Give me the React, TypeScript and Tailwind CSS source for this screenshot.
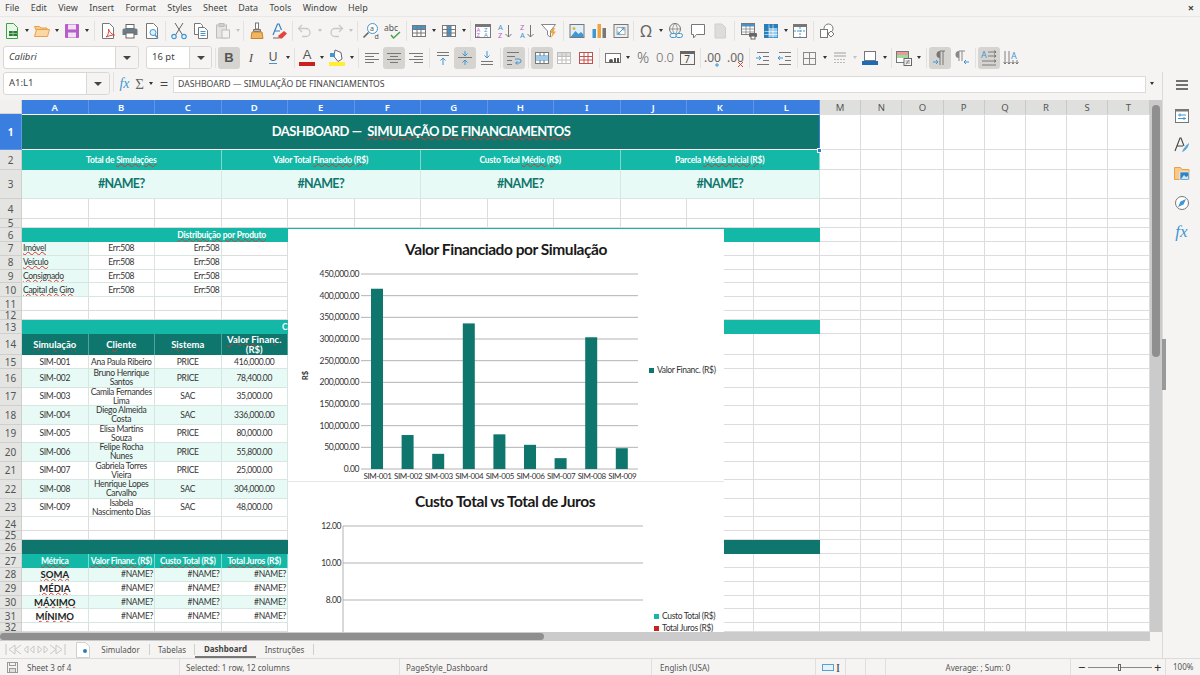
import React from "react";

const DARK = "bg-[#0f766e]";
const TEAL = "bg-[#14b8a6]";
const PALE = "bg-[#e8faf5]";
const SQ = "underline decoration-wavy decoration-[#e0322c] decoration-1 underline-offset-0";

function Ico({ children }: { children: React.ReactNode }) {
  return (
    <svg width="18" height="18" viewBox="0 0 18 18" fill="none" strokeWidth="1">
      {children}
    </svg>
  );
}

function Btn({ children, active, w = "w-[22px]" }: { children: React.ReactNode; active?: boolean; w?: string }) {
  return (
    <div className={`${w} h-[22px] shrink-0 flex items-center justify-center rounded-[3px] ${active ? "bg-[#d6d4d1]" : ""}`}>
      {children}
    </div>
  );
}

function Drop({ pale, w = "w-[8px]" }: { pale?: boolean; w?: string }) {
  return (
    <div className={`${w} shrink-0 flex justify-center`}>
      <div className={`w-0 h-0 border-x-[2.5px] border-x-transparent border-t-[3px] ${pale ? "border-t-[#c4c4c4]" : "border-t-[#333]"}`} />
    </div>
  );
}

function Sep({ w = "w-[5px]" }: { w?: string }) {
  return (
    <div className={`${w} shrink-0 flex justify-center`}>
      <div className="w-px h-[20px] bg-[#e3e2e0]" />
    </div>
  );
}

function Lines({ ys, x1 = 3, x2 = 15, color = "#777" }: { ys: [number, number?, number?][]; x1?: number; x2?: number; color?: string }) {
  return (
    <>
      {ys.map(([y, a, b], i) => (
        <line key={i} x1={a ?? x1} x2={b ?? x2} y1={y + 0.5} y2={y + 0.5} stroke={color} />
      ))}
    </>
  );
}

function TableIco({ fill, rows = false, color = "#777" }: { fill?: string; rows?: boolean; color?: string }) {
  return (
    <Ico>
      <rect x="2.5" y="3.5" width="13" height="11" fill="#fff" stroke={color} />
      {fill && (rows ? <rect x="3" y="4" width="12" height="3" fill={fill} /> : <rect x="7" y="4" width="4" height="10" fill={fill} />)}
      <path d="M2.5 7.5h13M2.5 11h13M7 3.5v11M11 3.5v11" stroke={color} />
    </Ico>
  );
}

function Row1() {
  return (
    <div className="h-[27px] flex items-center pl-px">
      <Btn>
        <Ico>
          <path d="M3.5 1.5h7l4 4v11h-11z" fill="#e9f6ea" stroke="#43a047" />
          <rect x="6" y="9" width="8" height="5" fill="#2e7d32" />
          <path d="M6 11.5h8M10 9v5" stroke="#cde8ce" strokeWidth="0.6" />
        </Ico>
      </Btn>
      <Drop />
      <Btn>
        <Ico>
          <path d="M1.5 4.5h5l1.5 1.5h6v2h-11z" fill="#f7c98a" stroke="#e6a24e" />
          <path d="M1.5 14.5l2-7h13l-2 7z" fill="#fbd7a3" stroke="#e6a24e" />
        </Ico>
      </Btn>
      <Drop />
      <Btn>
        <Ico>
          <rect x="2" y="2" width="14" height="14" rx="1" fill="#b65fc6" />
          <rect x="5" y="2.5" width="8" height="5" fill="#f2e0f5" />
          <rect x="5" y="10.5" width="8" height="5" fill="#f2e0f5" />
        </Ico>
      </Btn>
      <Drop />
      <Sep w="w-[6px]" />
      <Btn>
        <Ico>
          <path d="M3.5 1.5h7l4 4v11h-11z" fill="#fff" stroke="#777" />
          <path d="M7 15c2-1 3-5 2.5-8 1 3 2.5 5 6 6-3 0-6 1-8.5 2z" stroke="#d9453c" />
        </Ico>
      </Btn>
      <Btn>
        <Ico>
          <rect x="5" y="2.5" width="8" height="4" fill="#fff" stroke="#666" />
          <path d="M3 6.5h12a1.5 1.5 0 0 1 1.5 1.5v5h-15v-5a1.5 1.5 0 0 1 1.5-1.5z" fill="#6b7a84" />
          <rect x="5" y="11" width="8" height="5" fill="#fff" stroke="#666" />
        </Ico>
      </Btn>
      <Btn>
        <Ico>
          <path d="M3.5 1.5h7l4 4v11h-11z" fill="#fff" stroke="#777" />
          <circle cx="10" cy="10.5" r="3" fill="#e3f1fb" stroke="#3f97d3" />
          <path d="M12 13l3 3" stroke="#3f97d3" strokeWidth="1.5" />
        </Ico>
      </Btn>
      <Sep />
      <Btn>
        <Ico>
          <path d="M5 1l7.5 12M13 1L5.5 13" stroke="#666" />
          <circle cx="4" cy="14.5" r="2.2" stroke="#3f97d3" strokeWidth="1.2" />
          <circle cx="14" cy="14.5" r="2.2" stroke="#3f97d3" strokeWidth="1.2" />
        </Ico>
      </Btn>
      <Btn>
        <Ico>
          <path d="M2.5 1.5h6l2 2v9h-8z" fill="#fff" stroke="#777" />
          <path d="M6.5 5.5h6l3 3v8h-9z" fill="#fff" stroke="#777" />
          <path d="M8.5 9.5h5M8.5 11.5h5M8.5 13.5h5" stroke="#3f97d3" />
        </Ico>
      </Btn>
      <Btn>
        <Ico>
          <rect x="2.5" y="3" width="10" height="13" fill="#e3e3e1" stroke="#bdbdbb" />
          <rect x="5" y="1.5" width="5" height="3" fill="#cfcfcd" stroke="#bdbdbb" />
          <rect x="8" y="8" width="7.5" height="8" fill="#f2f2f0" stroke="#bdbdbb" />
        </Ico>
      </Btn>
      <Drop pale w="w-[7px]" />
      <Sep />
      <Btn>
        <Ico>
          <rect x="7.5" y="1" width="3" height="6" fill="#fff" stroke="#777" />
          <path d="M5.5 7.5h7v2h-7z" fill="#bbb" stroke="#777" />
          <path d="M4 10h10l1 6.5H3z" fill="#f3b45e" stroke="#c78430" />
        </Ico>
      </Btn>
      <Btn>
        <Ico>
          <path d="M3 13L7.5 2h1.5l2.5 6M5 9h5" stroke="#3a7fc1" strokeWidth="1.2" />
          <path d="M8 14l6-5 3 2.5-5 5H9.5z" fill="#e2453c" />
          <path d="M3 16h6" stroke="#666" />
        </Ico>
      </Btn>
      <Sep w="w-[4px]" />
      <Btn>
        <Ico>
          <path d="M6 3L2.5 6.5 6 10" stroke="#c8c8c6" strokeWidth="1.3" />
          <path d="M3 6.5h7a4 4 0 0 1 0 8H6" stroke="#c8c8c6" strokeWidth="1.3" />
        </Ico>
      </Btn>
      <Drop pale />
      <div className="w-px shrink-0" />
      <Btn>
        <Ico>
          <path d="M12 3l3.5 3.5L12 10" stroke="#c8c8c6" strokeWidth="1.3" />
          <path d="M15 6.5H8a4 4 0 0 0 0 8h4" stroke="#c8c8c6" strokeWidth="1.3" />
        </Ico>
      </Btn>
      <Drop pale />
      <Sep />
      <Btn>
        <Ico>
          <circle cx="10.5" cy="6.5" r="5" fill="#fff" stroke="#3f97d3" />
          <path d="M6.5 10.5l-5 5" stroke="#666" strokeWidth="1.6" />
          <text x="8" y="9" fontSize="7" fill="#555" fontFamily="Noto Sans">a</text>
          <text x="12.5" y="17" fontSize="7" fill="#555" fontFamily="Noto Sans">d</text>
        </Ico>
      </Btn>
      <Btn>
        <Ico>
          <text x="0" y="9" fontSize="8.5" fill="#555" fontFamily="Noto Sans">abc</text>
          <path d="M7 13l2.5 3L16 10" stroke="#43a047" strokeWidth="1.4" />
        </Ico>
      </Btn>
      <Sep w="w-[4px]" />
      <Btn><TableIco fill="#3f97d3" rows /></Btn>
      <Drop />
      <Btn><TableIco fill="#3f97d3" /></Btn>
      <Drop />
      <Sep w="w-[4px]" />
      <Btn>
        <Ico>
          <rect x="1.5" y="2.5" width="15" height="13" fill="#fff" stroke="#777" />
          <rect x="2" y="3" width="14" height="2" fill="#777" />
          <text x="2.5" y="10" fontSize="6" fill="#c061cb" fontFamily="Noto Sans">A</text>
          <text x="2.5" y="15" fontSize="6" fill="#c061cb" fontFamily="Noto Sans">Z</text>
          <text x="10" y="10" fontSize="6" fill="#3f97d3" fontFamily="Noto Sans">Z</text>
          <text x="10" y="15" fontSize="6" fill="#3f97d3" fontFamily="Noto Sans">A</text>
        </Ico>
      </Btn>
      <Btn>
        <Ico>
          <text x="2" y="8" fontSize="7.5" fill="#3f97d3" fontFamily="Noto Sans">A</text>
          <text x="2" y="16" fontSize="7.5" fill="#c061cb" fontFamily="Noto Sans">Z</text>
          <path d="M12.5 3v12M9.5 12l3 3 3-3" stroke="#777" />
        </Ico>
      </Btn>
      <Btn>
        <Ico>
          <text x="2" y="8" fontSize="7.5" fill="#c061cb" fontFamily="Noto Sans">Z</text>
          <text x="2" y="16" fontSize="7.5" fill="#3f97d3" fontFamily="Noto Sans">A</text>
          <path d="M12.5 3v12M9.5 12l3 3 3-3" stroke="#777" />
        </Ico>
      </Btn>
      <Btn>
        <Ico>
          <path d="M1.5 2.5h14l-5 6.5v6l-3-2V9z" fill="#fff" stroke="#888" />
          <path d="M13 6l-3 5h2.5L11 16l5-6.5h-2.5L15 6z" fill="#f0a53c" />
        </Ico>
      </Btn>
      <Sep w="w-[6px]" />
      <Btn>
        <Ico>
          <rect x="2" y="2.5" width="14" height="13" fill="#dff0fb" stroke="#777" />
          <circle cx="6" cy="6.5" r="1.5" fill="#f0b13c" />
          <path d="M2.5 15l5-6 3 3 2.5-2 2.5 2.5V15z" fill="#3f97d3" />
        </Ico>
      </Btn>
      <Btn>
        <Ico>
          <rect x="2.5" y="7" width="3.5" height="9" fill="#3f97d3" />
          <rect x="7.5" y="2" width="3.5" height="14" fill="#f0a53c" />
          <rect x="12.5" y="6" width="3.5" height="10" fill="#777" />
        </Ico>
      </Btn>
      <Btn>
        <Ico>
          <rect x="2" y="2.5" width="14" height="13" fill="#eee" stroke="#777" />
          <rect x="5" y="5.5" width="8" height="7" fill="#fff" stroke="#aaa" />
          <path d="M6 12l6-6M12 8.5V6H9.5M6 9.5V12h2.5" stroke="#3f97d3" />
        </Ico>
      </Btn>
      <Sep w="w-[3px]" />
      <Btn><span className="text-[16px] leading-none text-[#666] font-['Noto_Sans',sans-serif]">Ω</span></Btn>
      <Drop />
      <Btn>
        <Ico>
          <circle cx="8" cy="7" r="5.5" stroke="#777" />
          <path d="M2.5 7h11M8 1.5c-3 3-3 8 0 11M8 1.5c3 3 3 8 0 11" stroke="#777" strokeWidth="0.7" />
          <rect x="3" y="11.5" width="6.5" height="4" rx="2" fill="#f5f4f2" stroke="#3f97d3" />
          <rect x="9" y="11.5" width="6.5" height="4" rx="2" fill="#f5f4f2" stroke="#3f97d3" />
        </Ico>
      </Btn>
      <Btn>
        <Ico>
          <path d="M2.5 2.5h13v10H7.5L4.5 16v-3.5h-2z" fill="#fff" stroke="#777" />
        </Ico>
      </Btn>
      <Btn>
        <Ico>
          <path d="M4 2h7l3.5 3.5V16H4z" fill="#dcdcda" stroke="#cfcfcd" />
        </Ico>
      </Btn>
      <Sep w="w-[7px]" />
      <Btn>
        <Ico>
          <rect x="1.5" y="1.5" width="13" height="11" fill="#fff" stroke="#777" />
          <rect x="2" y="2" width="12" height="2.5" fill="#3f97d3" />
          <path d="M1.5 7h13M1.5 10h13M6 1.5v11M10 1.5v11" stroke="#777" strokeWidth="0.7" />
          <rect x="9" y="11" width="8" height="4" rx="1" fill="#666" />
          <rect x="11" y="14" width="4" height="3" fill="#fff" stroke="#666" />
        </Ico>
      </Btn>
      <Btn>
        <Ico>
          <rect x="2.5" y="2.5" width="13" height="13" fill="#9ccbe9" stroke="#3f97d3" />
          <rect x="2" y="2" width="5" height="14" fill="#2b7fb8" />
          <rect x="2" y="2" width="14" height="4" fill="#2b7fb8" />
          <path d="M2.5 9.5h13M2.5 12.5h13M7 2.5v13M11 2.5v13" stroke="#fff" strokeWidth="0.6" />
        </Ico>
      </Btn>
      <Drop w="w-[7px]" />
      <Btn>
        <Ico>
          <rect x="2.5" y="2.5" width="13" height="13" fill="#fff" stroke="#777" />
          <rect x="3" y="3" width="12" height="2" fill="#777" />
          <path d="M3 9h12M9 5v10" stroke="#3f97d3" strokeDasharray="2 1" />
        </Ico>
      </Btn>
      <Sep />
      <Btn>
        <Ico>
          <circle cx="10.5" cy="6.5" r="4.5" fill="#fff" stroke="#777" />
          <rect x="2.5" y="7.5" width="7" height="8" fill="#fff" stroke="#777" />
          <path d="M13 9l3 3-3 3-3-3z" fill="#fff" stroke="#777" />
        </Ico>
      </Btn>
    </div>
  );
}

function SelectBox({ label, w, divider, italic }: { label: string; w: string; divider: string; italic?: boolean }) {
  return (
    <div className={`${w} h-[23px] shrink-0 flex rounded-[3px] border border-[#d9d8d6] bg-white`}>
      <div className={`flex-1 flex items-center pl-[5px] text-[9.5px] text-[#444] ${italic ? "italic" : ""}`}>{label}</div>
      <div className={`${divider} flex items-center justify-center bg-[#f5f4f2] border-l border-[#d9d8d6] rounded-r-[3px]`}>
        <div className="w-0 h-0 border-x-[4px] border-x-transparent border-t-[4px] border-t-[#444]" />
      </div>
    </div>
  );
}

function Row2() {
  return (
    <div className="h-[28px] flex items-center pl-[3px] pb-px">
      <SelectBox label="Calibri" w="w-[136px]" divider="w-[23px]" italic />
      <div className="w-[7px] shrink-0" />
      <SelectBox label="16 pt" w="w-[66px]" divider="w-[22px]" />
      <Sep w="w-[6px]" />
      <Btn active><span className="text-[13px] font-bold text-[#555] font-['Liberation_Sans',sans-serif]">B</span></Btn>
      <Btn><span className="text-[13px] italic text-[#555] font-['Liberation_Serif',serif]">I</span></Btn>
      <Btn>
        <div className="flex flex-col items-center">
          <span className="text-[12px] leading-[12px] text-[#555] font-['Liberation_Sans',sans-serif]">U</span>
          <div className="w-[8px] h-px bg-[#3f97d3]" />
        </div>
      </Btn>
      <Drop />
      <Sep w="w-[4px]" />
      <Btn>
        <div className="flex flex-col items-center">
          <span className="text-[13px] leading-[12px] text-[#555] font-['Liberation_Sans',sans-serif]">A</span>
          <div className="w-[16px] h-[4px] mt-px bg-[#c9211e]" />
        </div>
      </Btn>
      <Drop />
      <Btn>
        <Ico>
          <path d="M7 1l6 2.5 1 6.5-4 2.5-4-5z" fill="#fff" stroke="#666" />
          <rect x="2" y="4" width="5" height="4" fill="#3f97d3" />
          <rect x="1" y="13" width="16" height="4" fill="#ffee33" />
        </Ico>
      </Btn>
      <Drop />
      <Sep />
      <Btn><Ico><Lines ys={[[4, 2, 16], [7, 2, 11], [10, 2, 16], [13, 2, 11]]} /></Ico></Btn>
      <Btn active><Ico><Lines ys={[[4, 2, 16], [7, 5, 13], [10, 2, 16], [13, 5, 13]]} /></Ico></Btn>
      <Btn><Ico><Lines ys={[[4, 2, 16], [7, 7, 16], [10, 2, 16], [13, 7, 16]]} /></Ico></Btn>
      <Sep />
      <Btn>
        <Ico>
          <Lines ys={[[3], [6]]} />
          <path d="M9 16V9M6.5 11.5L9 9l2.5 2.5" stroke="#3f97d3" />
        </Ico>
      </Btn>
      <Btn active>
        <Ico>
          <Lines ys={[[8, 2, 16]]} />
          <path d="M9 2v5M6.5 4.5L9 7l2.5-2.5M9 16v-5M6.5 13.5L9 11l2.5 2.5" stroke="#3f97d3" />
        </Ico>
      </Btn>
      <Btn>
        <Ico>
          <Lines ys={[[12], [15]]} />
          <path d="M9 2v7M6.5 6.5L9 9l2.5-2.5" stroke="#3f97d3" />
        </Ico>
      </Btn>
      <Sep />
      <Btn active>
        <Ico>
          <Lines ys={[[3, 2, 14], [7, 2, 10], [11, 2, 7], [15, 2, 7]]} />
          <path d="M10 10h4a2 2 0 0 1 0 4h-3M12.5 12.5L10.5 14l2 1.5" stroke="#3f97d3" />
        </Ico>
      </Btn>
      <Sep w="w-[6px]" />
      <Btn active>
        <Ico>
          <rect x="2.5" y="3.5" width="13" height="11" fill="#fff" stroke="#777" />
          <path d="M2.5 7h13M2.5 11h13" stroke="#3f97d3" />
          <path d="M3 9h12" stroke="#3f97d3" />
          <path d="M7 3.5V7M11 3.5V7M7 11v3.5M11 11v3.5" stroke="#777" />
        </Ico>
      </Btn>
      <Btn><TableIco color="#bdbdbb" fill="#dcdcda" rows /></Btn>
      <Btn><TableIco color="#c0504d" /></Btn>
      <Sep />
      <Btn>
        <Ico>
          <rect x="1.5" y="4.5" width="15" height="9" fill="#fff" stroke="#777" />
          <circle cx="7" cy="12" r="2" fill="#555" />
          <rect x="10" y="9" width="2" height="5" fill="#555" />
          <rect x="13" y="9" width="2" height="5" fill="#555" />
        </Ico>
      </Btn>
      <Drop />
      <Btn><span className="text-[15px] font-light text-[#666] font-['Noto_Sans',sans-serif]">%</span></Btn>
      <Btn><span className="text-[13px] font-light text-[#666] font-['Noto_Sans',sans-serif]">0.0</span></Btn>
      <Btn>
        <div className="w-[15px] h-[14px] border border-[#666] border-t-[3px] flex items-center justify-center text-[10px] leading-none text-[#444]">7</div>
      </Btn>
      <Sep w="w-[4px]" />
      <Btn>
        <Ico>
          <text x="0" y="13" fontSize="12" fill="#666" fontFamily="Noto Sans">.00</text>
          <path d="M13 14v4M11 16h4" stroke="#3f97d3" />
        </Ico>
      </Btn>
      <div className="w-px shrink-0" />
      <Btn>
        <Ico>
          <text x="0" y="13" fontSize="12" fill="#666" fontFamily="Noto Sans">.00</text>
          <path d="M11 13l5 5M16 13l-5 5" stroke="#d9453c" />
        </Ico>
      </Btn>
      <Sep />
      <Btn>
        <Ico>
          <Lines ys={[[3], [15]]} />
          <Lines ys={[[7, 9, 15], [11, 9, 15]]} />
          <path d="M2 9h5M5 7l2 2-2 2" stroke="#3f97d3" />
        </Ico>
      </Btn>
      <Btn>
        <Ico>
          <Lines ys={[[3], [15]]} />
          <Lines ys={[[7, 9, 15], [11, 9, 15]]} />
          <path d="M7 9H2M4 7L2 9l2 2" stroke="#3f97d3" />
        </Ico>
      </Btn>
      <Sep w="w-[3px]" />
      <Btn>
        <Ico>
          <rect x="2.5" y="3.5" width="12" height="12" stroke="#888" />
          <path d="M8.5 3.5v12M2.5 9.5h12" stroke="#888" />
        </Ico>
      </Btn>
      <Drop />
      <Btn>
        <Ico>
          <path d="M3 4h12M3 7h12" stroke="#bbb" strokeWidth="1.3" />
          <path d="M3 10.5h12M3 13.5h12" stroke="#bbb" strokeDasharray="2 1" />
        </Ico>
      </Btn>
      <Drop pale />
      <Btn>
        <Ico>
          <rect x="3.5" y="2.5" width="11" height="9" fill="#fff" stroke="#777" />
          <rect x="1" y="12" width="16" height="4" fill="#1f6ab5" />
        </Ico>
      </Btn>
      <Drop />
      <Sep w="w-[4px]" />
      <Btn>
        <Ico>
          <rect x="1.5" y="2.5" width="12" height="11" fill="#fff" stroke="#777" />
          <rect x="2" y="3" width="11" height="3" fill="#e99" />
          <rect x="2" y="6" width="11" height="3" fill="#9d9" />
          <rect x="9" y="9.5" width="7.5" height="7" fill="#fff" stroke="#666" />
          <path d="M10.5 12h4.5M10.5 14h4.5M14 11l-3 4.5" stroke="#666" strokeWidth="0.7" />
        </Ico>
      </Btn>
      <Drop />
      <Sep w="w-[6px]" />
      <Btn active>
        <Ico>
          <path d="M9 16V2h5M12 2v14" stroke="#777" />
          <path d="M9 2a3.5 3.5 0 0 0 0 7" fill="#777" />
          <path d="M2 13h5M5 11l2 2-2 2" stroke="#3f97d3" />
        </Ico>
      </Btn>
      <Btn>
        <Ico>
          <path d="M6 12V2h6M9 2v10" stroke="#888" />
          <path d="M6 2a3.5 3.5 0 0 0 0 7" fill="#888" />
          <path d="M16 13h-5M13 11l-2 2 2 2" stroke="#3f97d3" />
        </Ico>
      </Btn>
      <Sep w="w-[5px]" />
      <Btn active>
        <Ico>
          <text x="1" y="9" fontSize="9" fill="#3f97d3" fontFamily="Noto Sans">A</text>
          <path d="M8 3h8M8 7h8M2 12h14M2 16h14M14 1.5L16 3l-2 1.5M14 5.5L16 7l-2 1.5M14 10.5L16 12l-2 1.5" stroke="#666" strokeWidth="0.8" />
        </Ico>
      </Btn>
      <Btn>
        <Ico>
          <text x="9" y="10" fontSize="9" fill="#3f97d3" fontFamily="Noto Sans">A</text>
          <path d="M3 2v13M7 2v13M11 11v4M15 11v4M1.5 13L3 15l1.5-2M5.5 13L7 15l1.5-2M9.5 13l1.5 2 1.5-2M13.5 13l1.5 2 1.5-2" stroke="#666" strokeWidth="0.8" />
        </Ico>
      </Btn>
    </div>
  );
}

function FormulaBar() {
  return (
    <div className="h-[28px] flex items-start pl-[3px] text-[#333]">
      <SelectBox label="A1:L1" w="w-[107px]" divider="w-[23px]" />
      <Sep w="w-[7px]" />
      <span className="w-[15px] text-center text-[14px] italic leading-[24px] text-[#3f97d3] font-['Liberation_Serif',serif]">fx</span>
      <span className="w-[15px] text-center text-[15px] leading-[24px] text-[#666] font-['Liberation_Serif',serif]">Σ</span>
      <div className="pt-[10px]"><Drop /></div>
      <span className="w-[18px] text-center text-[15px] leading-[23px] text-[#444] font-['Noto_Sans',sans-serif]">=</span>
      <div className="mt-[4px] w-[973px] h-[17px] flex items-center pl-[4px] bg-white border border-[#dcdbd9] text-[8.7px] text-[#444] font-['Noto_Sans',sans-serif]">
        DASHBOARD — SIMULAÇÃO DE FINANCIAMENTOS
      </div>
      <div className="w-[12px] pt-[10px] pl-[2px]"><Drop /></div>
    </div>
  );
}

const LETTERS = "ABCDEFGHIJKLMNOPQRST".split("");
const GRID = "grid grid-cols-[repeat(12,66.5px)_repeat(8,41.2px)]";

function ColHead() {
  return (
    <div className="flex h-[14px] shrink-0">
      <div className="w-[22px] shrink-0 bg-[#f1f0ee] border-r border-b border-[#d4d3d1]" />
      <div className={GRID}>
        {LETTERS.map((l, i) => (
          <div
            key={l}
            className={`flex items-center justify-center pt-px text-[9.5px] border-r ${
              i < 12 ? "bg-[#3a7fdf] text-white font-semibold border-[#5f97e6]" : "bg-[#dfdfdd] text-[#555] border-[#c9c9c7]"
            }`}
          >
            {l}
          </div>
        ))}
      </div>
    </div>
  );
}

function Sheet({
  n,
  h,
  from = 0,
  blue,
  children,
}: {
  n: number;
  h: string;
  from?: number;
  blue?: boolean;
  children?: React.ReactNode;
}) {
  const empties = [];
  for (let i = from; i < 20; i++) empties.push(i);
  return (
    <div className={`flex ${h} shrink-0`}>
      <div
        className={`w-[22px] shrink-0 flex items-center justify-center overflow-hidden text-[10px] leading-none border-r border-b ${
          blue ? "bg-[#3a7fdf] text-white font-bold border-[#5f97e6]" : "bg-[#e4e4e2] text-[#555] border-[#cfcfcd]"
        }`}
      >
        {n}
      </div>
      <div className={`${GRID} font-['Lato',sans-serif]`}>
        {children}
        {empties.map((i) => (
          <div key={i} className="border-r border-b border-[#dcdcdc]" />
        ))}
      </div>
    </div>
  );
}

function Cell({ className = "", children }: { className?: string; children?: React.ReactNode }) {
  return <div className={`flex items-center overflow-hidden whitespace-pre ${className}`}>{children}</div>;
}

const C = "justify-center text-center";
const R = "justify-end pr-px";
const LINE = "border-r border-b border-[#d8e6e2]";
const BODY = `pt-px text-[8.5px] leading-[9px] tracking-[-0.3px] text-[#333] ${LINE}`;

const SIMS = [
  ["SIM-001", "Ana Paula Ribeiro", "PRICE", "416,000.00"],
  ["SIM-002", "Bruno Henrique\nSantos", "PRICE", "78,400.00"],
  ["SIM-003", "Camila Fernandes\nLima", "SAC", "35,000.00"],
  ["SIM-004", "Diego Almeida\nCosta", "SAC", "336,000.00"],
  ["SIM-005", "Elisa Martins\nSouza", "PRICE", "80,000.00"],
  ["SIM-006", "Felipe Rocha\nNunes", "PRICE", "55,800.00"],
  ["SIM-007", "Gabriela Torres\nVieira", "PRICE", "25,000.00"],
  ["SIM-008", "Henrique Lopes\nCarvalho", "SAC", "304,000.00"],
  ["SIM-009", "Isabela\nNascimento Dias", "SAC", "48,000.00"],
];
const PRODUCTS = ["Imóvel", "Veículo", "Consignado", "Capital de Giro"];
const METRICS = ["SOMA", "MÉDIA", "MÁXIMO", "MÍNIMO"];
const KPIS = [
  ["Total de ", "Simulações"],
  ["Valor Total ", "Financiado (R$)"],
  ["Custo Total ", "Médio (R$)"],
  ["Parcela ", "Média Inicial (R$)"],
];

function Spreadsheet() {
  return (
    <div className="relative w-[1150px] h-[532px] overflow-hidden bg-white">
      <ColHead />
      <Sheet n={1} h="h-[36px]" from={12} blue>
        <Cell className={`col-span-12 ${DARK} ${C} pb-px text-[13px] tracking-[-0.5px] font-bold text-white`}>
          DASHBOARD — <span className={`ml-[3px] ${SQ}`}>SIMULAÇÃO DE FINANCIAMENTOS</span>
        </Cell>
      </Sheet>
      <Sheet n={2} h="h-[20px]" from={12}>
        {KPIS.map(([a, b]) => (
          <Cell key={a} className={`col-span-3 ${TEAL} ${C} text-[8.5px] tracking-[-0.2px] font-bold text-white border-r border-[#7fd9ca]`}>
            {a}<span className={SQ}>{b}</span>
          </Cell>
        ))}
      </Sheet>
      <Sheet n={3} h="h-[29px]" from={12}>
        {KPIS.map(([a]) => (
          <Cell key={a} className={`col-span-3 ${PALE} ${C} pt-px text-[12.5px] tracking-[-0.6px] font-bold text-[#0f766e] border-r border-b border-[#d5e8e3]`}>
            #NAME?
          </Cell>
        ))}
      </Sheet>
      <Sheet n={4} h="h-[20px]" />
      <Sheet n={5} h="h-[9px]" />
      <Sheet n={6} h="h-[14px]" from={12}>
        <Cell className={`col-span-6 ${TEAL} justify-end pr-[155px] text-[8.5px] tracking-[-0.2px] font-bold text-white`}>
          <span className={SQ}>Distribuição por Produto</span>
        </Cell>
        <Cell className={`col-span-6 ${TEAL}`} />
      </Sheet>
      {PRODUCTS.map((p, i) => (
        <Sheet key={p} n={7 + i} h="h-[13.75px]" from={3}>
          <Cell className={`${BODY} ${PALE} pl-px`}><span className={SQ}>{p}</span></Cell>
          <Cell className={`${BODY} ${C}`}>Err:508</Cell>
          <Cell className={`${BODY} ${R}`}>Err:508</Cell>
        </Sheet>
      ))}
      <Sheet n={11} h="h-[14px]" />
      <Sheet n={12} h="h-[9px]" />
      <Sheet n={13} h="h-[14px]" from={12}>
        <Cell className={`col-span-12 ${TEAL} pl-[260px] text-[8.5px] font-bold text-white`}>Comparativo de Simulações</Cell>
      </Sheet>
      <Sheet n={14} h="h-[21px]" from={4}>
        {["Simulação", "Cliente", "Sistema", "Valor Financ.\n(R$)"].map((t) => (
          <Cell key={t} className={`${DARK} ${C} text-[9.5px] leading-[10px] font-bold text-white border-r border-[#4ea59c]`}>
            <span className={SQ}>{t}</span>
          </Cell>
        ))}
      </Sheet>
      {SIMS.map((s, i) => {
        const bg = i % 2 === 1 ? PALE : "bg-white";
        return (
          <Sheet key={s[0]} n={15 + i} h={i === 0 ? "h-[14px]" : "h-[18.5px]"} from={4}>
            {s.map((t, j) => (
              <Cell key={j} className={`${BODY} ${bg} ${C}`}>{t}</Cell>
            ))}
          </Sheet>
        );
      })}
      <Sheet n={24} h="h-[14px]" />
      <Sheet n={25} h="h-[9px]" />
      <Sheet n={26} h="h-[14px]" from={12}>
        <Cell className={`col-span-12 ${DARK}`} />
      </Sheet>
      <Sheet n={27} h="h-[14px]" from={4}>
        {["Métrica", "Valor Financ. (R$)", "Custo Total (R$)", "Total Juros (R$)"].map((t) => (
          <Cell key={t} className={`${TEAL} ${C} text-[8.5px] tracking-[-0.25px] font-bold text-white border-r border-[#7fd9ca]`}>
            <span className={SQ}>{t}</span>
          </Cell>
        ))}
      </Sheet>
      {METRICS.map((m, i) => {
        const bg = i % 2 === 0 ? PALE : "bg-white";
        return (
          <Sheet key={m} n={28 + i} h="h-[13.75px]" from={4}>
            <Cell className={`pt-px text-[9.5px] leading-[9px] ${LINE} ${bg} ${C} font-bold text-[#222]`}><span className={SQ}>{m}</span></Cell>
            {[0, 1, 2].map((j) => (
              <Cell key={j} className={`${BODY} ${bg} ${R}`}>#NAME?</Cell>
            ))}
          </Sheet>
        );
      })}
      <Sheet n={32} h="h-[9px]" />

      {/* selection A1:L1 */}
      <div className="absolute left-[22px] top-[14px] w-[798px] h-[36px] border-y-[1.5px] border-white border-r border-r-[#3a7fdf]" />
      <div className="absolute left-[817px] top-[48px] w-[5px] h-[5px] bg-[#2f7ad6] border border-white" />

      {/* charts floating over the cells */}
      <div className="absolute left-[288px] top-[129px] w-[436px] h-[403px] bg-white overflow-hidden">
        <ValorChart />
        <div className="h-px bg-[#e6e6e6]" />
        <CustoChart />
      </div>
    </div>
  );
}

const BARS = [416000, 78400, 35000, 336000, 80000, 55800, 25000, 304000, 48000];
const TICKS = [450, 400, 350, 300, 250, 200, 150, 100, 50, 0];

function ValorChart() {
  const base = 240;
  const scale = 195 / 450000;
  return (
    <svg width="436" height="252" className="block font-['Lato',sans-serif]">
      <text x="218" y="26" textAnchor="middle" fontSize="15.5" fontWeight="700" letterSpacing="-0.45" fill="#1a1a1a">
        Valor Financiado por Simulação
      </text>
      {TICKS.map((t) => {
        const y = base - t * 1000 * scale;
        return (
          <g key={t}>
            <line x1="73" x2="350" y1={y} y2={y} stroke="#b3b3b3" />
            <text x="71" y={y + 3} textAnchor="end" fontSize="8.5" letterSpacing="-0.4" fill="#333">
              {t === 0 ? "0.00" : `${t},000.00`}
            </text>
          </g>
        );
      })}
      {BARS.map((v, i) => {
        const x = 89 + i * 30.6;
        const hh = v * scale;
        return (
          <g key={i}>
            <rect x={x - 6} y={base - hh} width="12" height={hh} fill="#0f766e" />
            <text x={x + 0.5} y={base + 10} textAnchor="middle" fontSize="8" letterSpacing="-0.4" fill="#333">
              SIM-00{i + 1}
            </text>
          </g>
        );
      })}
      <text x="0" y="0" transform="translate(20 151) rotate(-90)" fontSize="7.5" fontWeight="700" fill="#333">
        R$
      </text>
      <rect x="361" y="139" width="5" height="5" fill="#0f766e" />
      <text x="369" y="144" fontSize="8.5" letterSpacing="-0.35" fill="#333">Valor Financ. (R$)</text>
    </svg>
  );
}

function CustoChart() {
  const ys = [{ y: 44, t: "12.00" }, { y: 81, t: "10.00" }, { y: 118, t: "8.00" }];
  return (
    <svg width="436" height="150" className="block font-['Lato',sans-serif]">
      <text x="217" y="25" textAnchor="middle" fontSize="15.5" fontWeight="700" letterSpacing="-0.45" fill="#1a1a1a">
        Custo Total vs Total de Juros
      </text>
      {ys.map(({ y, t }) => (
        <g key={t}>
          <line x1="55" x2="355" y1={y} y2={y} stroke="#b3b3b3" />
          <text x="53" y={y + 3} textAnchor="end" fontSize="8.5" letterSpacing="-0.4" fill="#333">{t}</text>
        </g>
      ))}
      <line x1="55" x2="55" y1="44" y2="150" stroke="#b3b3b3" />
      <rect x="366" y="132" width="5" height="5" fill="#14b8a6" />
      <text x="374" y="137" fontSize="8.5" letterSpacing="-0.35" fill="#333">Custo Total (R$)</text>
      <rect x="366" y="144" width="5" height="5" fill="#c9211e" />
      <text x="374" y="149" fontSize="8.5" letterSpacing="-0.35" fill="#333">Total Juros (R$)</text>
    </svg>
  );
}

function Tabs() {
  const item = "text-[8px] text-[#555]";
  return (
    <div className="h-[17px] flex items-center pl-[5px] font-['Noto_Sans',sans-serif]">
      <svg width="61" height="13" viewBox="0 0 61 13" fill="none" stroke="#c8c8c6">
        <path d="M1 1v11M60 1v11M10 2L4 6.5l6 4.5zM16 2l-6 4.5 6 4.5M23 3l-4 3.5 4 3.5zM29 3l-4 3.5 4 3.5zM33 3l4 3.5-4 3.5zM39 3l4 3.5-4 3.5zM45 2l6 4.5-6 4.5M51 2l6 4.5-6 4.5z" />
      </svg>
      <svg width="14" height="16" viewBox="0 0 14 16" className="ml-[10px]">
        <path d="M0.5 0.5h9l4 4v11h-13z" fill="#fff" stroke="#d0d0ce" />
        <circle cx="9" cy="9" r="2" fill="#2b7fb8" />
      </svg>
      <div className={`w-[59px] text-center pl-[2px] ${item}`}>Simulador</div>
      <div className="w-px h-[11px] bg-[#cfcfcd]" />
      <div className={`w-[44px] text-center ${item}`}>Tabelas</div>
      <div className="w-px h-[11px] bg-[#cfcfcd]" />
      <div className="w-[61px] h-[17px] flex items-center justify-center text-[8px] font-bold text-[#444] border-b-2 border-[#777]">Dashboard</div>
      <div className={`w-[57px] text-center ${item}`}>Instruções</div>
      <div className="w-px h-[11px] bg-[#cfcfcd]" />
    </div>
  );
}

function SideBar() {
  return (
    <div className="relative w-[38px] border-l border-[#dcdbd9] flex flex-col items-center">
      <div className="absolute left-[-1px] top-[267px] w-[4px] h-[51px] bg-[#999]" />
      <div className="h-[26px] flex items-center">
        <svg width="14" height="12" viewBox="0 0 14 12"><path d="M1 2h12M1 6h12M1 10h12" stroke="#444" strokeWidth="1.3" /></svg>
      </div>
      <div className="h-[33px] flex items-center pt-[3px]">
        <Ico>
          <rect x="2.5" y="2.5" width="13" height="13" fill="#fff" stroke="#777" />
          <rect x="2.5" y="2.5" width="13" height="2" fill="#777" />
          <path d="M5 8h8M5 11.5h8" stroke="#3f97d3" />
          <path d="M7 6.5v3M11 10v3" stroke="#3f97d3" />
        </Ico>
      </div>
      <div className="h-[27px] flex items-center">
        <Ico>
          <path d="M2 15L7 2h1l3 8M4 10h6" stroke="#444" strokeWidth="1.1" />
          <path d="M9 16c1-3 4-7 7-9 0 3-3 8-7 9z" fill="#5aa7dc" />
        </Ico>
      </div>
      <div className="h-[30px] flex items-center">
        <Ico>
          <path d="M1.5 3.5h6l1.5 2h7v10h-14.5z" fill="#f7c98a" stroke="#e6a24e" />
          <rect x="7" y="8" width="9" height="8" fill="#2f83c5" stroke="#fff" strokeWidth="0.6" />
          <path d="M8 15l3-4 2 2 2-1v3z" fill="#cfe6f7" />
        </Ico>
      </div>
      <div className="h-[29px] flex items-center">
        <Ico>
          <circle cx="9" cy="9" r="6.5" fill="#fff" stroke="#777" />
          <path d="M13 5l-2.500 5.500L5 13l2.500-5.500z" fill="#3f97d3" />
        </Ico>
      </div>
      <div className="h-[29px] flex items-center text-[17px] italic text-[#3f97d3] font-['Liberation_Serif',serif]">fx</div>
    </div>
  );
}

function StatusBar() {
  const cell = "h-[17px] shrink-0 flex items-center border-r border-[#e0dfdd]";
  return (
    <div className="h-[17px] flex text-[8px] text-[#555] font-['Noto_Sans',sans-serif] border-t border-[#dcdbd9]">
      <div className={`${cell} w-[180px] pl-[6px]`}>
        <svg width="13" height="13" viewBox="0 0 13 13" className="mr-[8px]">
          <rect x="1.5" y="1.5" width="10" height="10" fill="none" stroke="#999" />
          <rect x="3.5" y="1.5" width="6" height="3" fill="none" stroke="#999" />
          <rect x="3.5" y="7.5" width="6" height="4" fill="#ddd" stroke="#999" />
        </svg>
        Sheet 3 of 4
      </div>
      <div className={`${cell} w-[220px] pl-[6px]`}>Selected: 1 row, 12 columns</div>
      <div className={`${cell} w-[252px] pl-[6px]`}>PageStyle_Dashboard</div>
      <div className={`${cell} w-[164px] pl-[8px]`}>English (USA)</div>
      <div className={`${cell} w-[30px] pl-[6px]`}>
        <div className="w-[12px] h-[7px] border border-[#5aa0d5] bg-[#e6f1f9]" />
        <span className="ml-[2px] text-[12px] text-[#444] font-['Liberation_Serif',serif]">I</span>
      </div>
      <div className={`${cell} w-[20px]`} />
      <div className={`${cell} w-[20px]`} />
      <div className={`${cell} w-[185px] justify-center`}>Average: ; Sum: 0</div>
      <div className={`${cell} w-[95px] pl-[7px] text-[#333]`}>
        <span className="w-[10px] text-[13px] leading-none">−</span>
        <div className="relative w-[64px] h-px bg-[#888] mr-[2px]">
          <div className="absolute left-[30px] top-[-3px] w-[3px] h-[7px] bg-[#f5f4f2] border border-[#666]" />
        </div>
        <span className="text-[13px] leading-none">+</span>
      </div>
      <div className="flex items-center pl-[7px]">100%</div>
    </div>
  );
}

export default function App() {
  return (
    <div className="w-[1200px] h-[675px] overflow-hidden flex flex-col bg-[#f5f4f2] font-['Noto_Sans',sans-serif]">
      <div className="h-[17px] shrink-0 flex items-center pl-[5px] gap-[11.3px] text-[9px] text-[#444] border-b border-[#e9e8e6] relative">
        {["File", "Edit", "View", "Insert", "Format", "Styles", "Sheet", "Data", "Tools", "Window", "Help"].map((m) => (
          <span key={m}>{m}</span>
        ))}
        <span className="absolute right-[6px] top-0 text-[11px] font-bold leading-[16px] text-[#444]">×</span>
      </div>
      <Row1 />
      <Row2 />
      <div className="flex h-[586px]">
        <div className="w-[1162px] flex flex-col">
          <FormulaBar />
          <div className="flex h-[532px]">
            <Spreadsheet />
            <div className="w-[12px] bg-[#cbcbcb]">
              <div className="mx-[2px] mt-[5px] w-[8px] h-[252px] rounded-[4px] bg-[#8f8f8f]" />
            </div>
          </div>
          <div className="h-[9px] bg-[#cbcbcb] py-px mr-[12px]">
            <div className="w-[544px] h-[7px] rounded-[4px] bg-[#8f8f8f]" />
          </div>
          <Tabs />
        </div>
        <SideBar />
      </div>
      <StatusBar />
    </div>
  );
}
